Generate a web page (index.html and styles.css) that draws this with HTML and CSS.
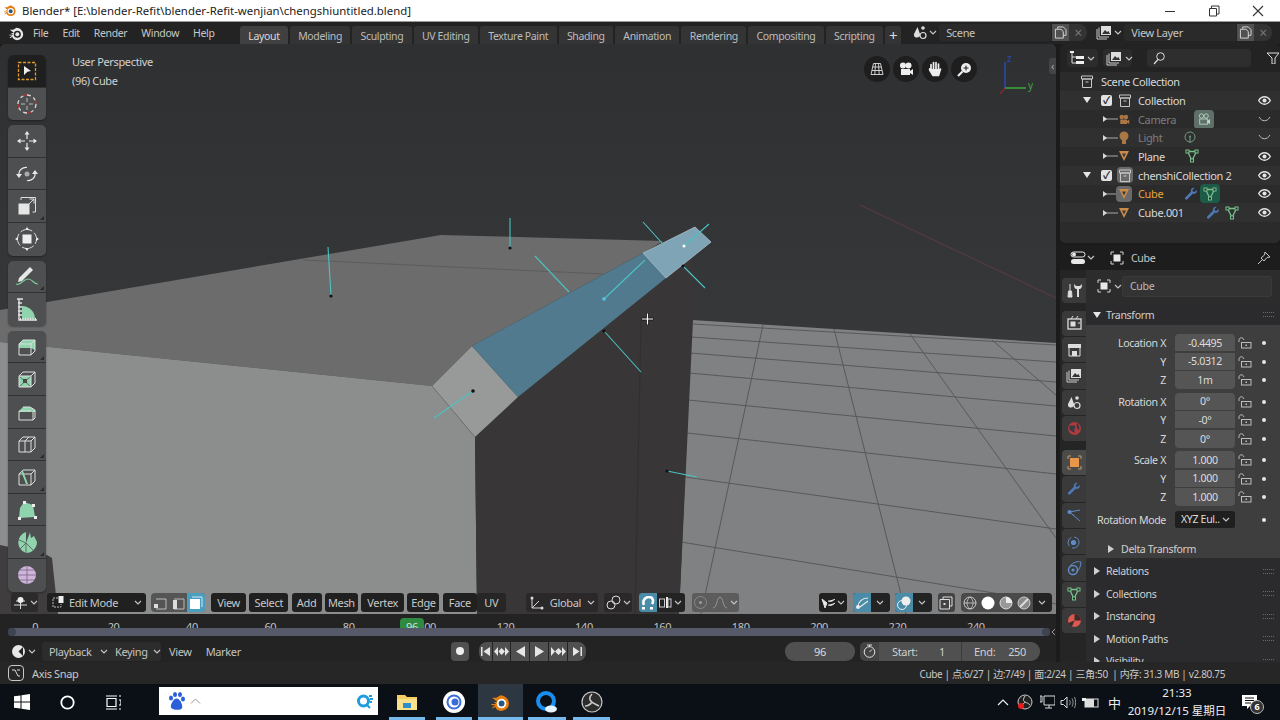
FILE: index.html
```html
<!DOCTYPE html>
<html lang="en">
<head>
<meta charset="utf-8">
<title>Blender</title>
<link rel="stylesheet" href="styles.css">
</head>
<body>
<svg class="defs" width="0" height="0">
  <defs>
    <symbol id="eye" viewBox="0 0 12 12"><path d="M.6 6C2.2 3.4 4 2.5 6 2.5S9.800 3.400 11.400 6C9.800 8.600 8 9.500 6 9.500S2.200 8.600.6 6Z" fill="none" stroke="#e4e4e4" stroke-width="1.300"/><circle cx="6" cy="6" r="1.900" fill="#e4e4e4"/></symbol>
    <symbol id="lock" viewBox="0 0 14 12"><path d="M1 5V3.200C1 1.600 2.200 .8 3.400 .8S5.600 1.600 5.800 3" fill="none" stroke="#bdbdbd"/><rect x="3.500" y="5.500" width="9.500" height="5.500" fill="none" stroke="#bdbdbd"/><rect x="7.500" y="7.500" width="1.500" height="1.500" fill="#bdbdbd"/></symbol>
    <symbol id="archive" viewBox="0 0 12 13"><path d="M.5 1H11.500M1.500 4H10.500V12.500H1.500ZM4.500 7H7.500M.5 1V4H11.500V1" fill="none" stroke="#c8c8c8" stroke-width="1"/></symbol>
    <symbol id="meshobj" viewBox="0 0 12 12"><path d="M1 1H11L6 11Z" fill="#c98a4c"/><path d="M4 3.400H8L6 7.400Z" fill="#3a3a3a"/></symbol>
    <symbol id="meshdata" viewBox="0 0 14 14"><path d="M2.500 2.500H11.500L7 11.500Z" fill="none" stroke="#76c28c" stroke-width="1.300"/><rect x="1" y="1" width="3" height="3" fill="#2c2c2c" stroke="#76c28c"/><rect x="10" y="1" width="3" height="3" fill="#2c2c2c" stroke="#76c28c"/><rect x="5.500" y="10" width="3" height="3" fill="#2c2c2c" stroke="#76c28c"/></symbol>
    <symbol id="wrench" viewBox="0 0 14 14"><path d="M12.800 2.900 10.400 5 8.800 4.600 8.400 3 10.600 .9C8.600.3 6.300 1.800 6.900 4.700L1.200 10.500C.3 11.500 1.900 13.400 3 12.400L8.800 6.700C11.400 7.400 13.400 5.400 12.800 2.900Z" fill="#4d78b5"/></symbol>
    <symbol id="objbox" viewBox="0 0 14 14"><path d="M1 4V1H4M10 1H13V4M13 10V13H10M4 13H1V10" fill="none" stroke="#d5d5d5"/><rect x="3.500" y="3.500" width="7" height="7" fill="#e8e8e8"/></symbol>
    <symbol id="chev" viewBox="0 0 8 5"><path d="M1 1 4 4 7 1" fill="none" stroke="#c4c4c4" stroke-width="1.200"/></symbol>
    <symbol id="copy" viewBox="0 0 14 14"><path d="M4 3V1H10L13 4V10H10M1.500 3.500H7.500L10 6V13H1.500Z" fill="none" stroke="#dcdcdc"/></symbol>
    <symbol id="cube" viewBox="0 0 20 20"><path d="M2 7H14V18H2ZM2 7 6 3H18V14L14 18M14 7 18 3" fill="none" stroke="#dedede"/></symbol>
    <symbol id="tri-r" viewBox="0 0 8 8"><path d="M1 0 7 4 1 8Z" fill="#cfcfcf"/></symbol>
    <symbol id="tri-d" viewBox="0 0 8 8"><path d="M0 1H8L4 7Z" fill="#e5e5e5"/></symbol>
    <symbol id="grip" viewBox="0 0 11 5"><path d="M0 .5H11M0 4.500H11" stroke="#6a6a6a" stroke-dasharray="1 1"/></symbol>
    <symbol id="branch" viewBox="0 0 18 8"><path d="M5 4H18" stroke="#a8a8a8"/><path d="M3 1 7 4 3 7Z" fill="#d8d8d8"/></symbol>
    <symbol id="blender" viewBox="0 0 20 18"><path d="M1 10.500H6L3.500 8.500H7L2 4.500H6L10 2C14 2 18 5.500 18 10S14 17 10.500 17C7.500 17 5.500 15 5 13L3 14.500H1.500L5 11.500H2Z" fill="#e87d0d"/><circle cx="11" cy="10" r="4.500" fill="#fff"/><circle cx="11" cy="10" r="2.800" fill="#265787"/></symbol>
  </defs>
</svg>

<header class="titlebar">
  <svg class="title-logo" width="14" height="13"><use href="#blender"/></svg>
  <span class="title-text">Blender* [E:\blender-Refit\blender-Refit-wenjian\chengshiuntitled.blend]</span>
  <div class="winctl">
    <svg width="12" height="12" viewBox="0 0 12 12"><path d="M1 6.500H11" stroke="#333"/></svg>
    <svg width="12" height="12" viewBox="0 0 12 12"><path d="M3.500 3V1H11V9H9M1.500 3.500H8.500V11H1.500Z" fill="none" stroke="#333"/></svg>
    <svg width="12" height="12" viewBox="0 0 12 12"><path d="M1 1 11 11M11 1 1 11" stroke="#333" stroke-width="1.100"/></svg>
  </div>
</header>

<nav class="topbar">
  <svg class="top-logo" width="17" height="15" viewBox="0 0 20 18"><path d="M1 10.500H6L3.500 8.500H7L2 4.500H6L10 2C14 2 18 5.500 18 10S14 17 10.500 17C7.500 17 5.500 15 5 13L3 14.500H1.500L5 11.500H2Z" fill="#e6e6e6"/><circle cx="11" cy="10" r="4.200" fill="#232323"/><circle cx="11" cy="10" r="2.400" fill="#e6e6e6"/></svg>
  <div class="menus"><span>File</span><span>Edit</span><span>Render</span><span>Window</span><span>Help</span></div>
  <div class="tabs">
    <span class="tab active">Layout</span><span class="tab">Modeling</span><span class="tab">Sculpting</span><span class="tab">UV Editing</span><span class="tab">Texture Paint</span><span class="tab">Shading</span><span class="tab">Animation</span><span class="tab">Rendering</span><span class="tab">Compositing</span><span class="tab">Scripting</span><span class="tab plus">+</span>
  </div>
  <div class="selector sel-scene">
    <svg width="14" height="15" viewBox="0 0 14 15"><path d="M4.500 2 1 9C.5 11 2 13 4 12.500 6 12.500 7.500 11 7 9Z" fill="#dcdcdc"/><circle cx="10" cy="10.500" r="3" fill="none" stroke="#dcdcdc" stroke-width="1.200"/><circle cx="10" cy="3" r="1.800" fill="#dcdcdc"/></svg>
    <svg class="ch" width="8" height="5"><use href="#chev"/></svg>
    <span class="sel-field">Scene</span>
    <span class="sel-copy"><svg width="13" height="13"><use href="#copy"/></svg></span>
    <span class="sel-x">×</span>
  </div>
  <div class="selector sel-layer">
    <svg width="16" height="15" viewBox="0 0 16 15"><path d="M1 4V14H11M3 2.500V12H13" fill="none" stroke="#ccc"/><rect x="5" y="1" width="10" height="9" fill="#ddd"/><path d="M6 9 9 5 11 7 12.500 6 14 9Z" fill="#333"/></svg>
    <svg class="ch" width="8" height="5"><use href="#chev"/></svg>
    <span class="sel-field">View Layer</span>
    <span class="sel-copy"><svg width="13" height="13"><use href="#copy"/></svg></span>
    <span class="sel-x">×</span>
  </div>
</nav>

<main class="workspace">
  <div class="leftcol">
  <section class="viewport">
    <svg class="scene" viewBox="0 44 1056 570" preserveAspectRatio="none">
      <defs><linearGradient id="bg" x1="0" y1="0" x2="0" y2="1"><stop offset="0" stop-color="#2f3031"/><stop offset=".55" stop-color="#37383a"/><stop offset="1" stop-color="#36373a"/></linearGradient></defs>
      <rect x="0" y="44" width="1056" height="570" fill="url(#bg)"/>
      <path d="M860 205 1056 298" stroke="#5f3a42" stroke-width="1"/>
      <path d="M692 320 1056 343V614H679Z" fill="#808182"/>
      <g stroke="#58595b" stroke-width="1" fill="none">
        <path d="M693 324 1056 345M691 337 1056 362M690 353 1056 382M689 373 1056 406M688 400 1056 436M687 433 1056 474M685 477 1056 529M681 542 1000 594 1056 604"/>
        <path d="M763 325 701 614M834 329 906 614M910 334 1056 538M992 340 1056 395"/>
      </g>
      <path d="M0 310 441 235 663 241 643 253 472 346 432 386 0 342Z" fill="#6c6c6d"/>
      <path d="M303 260 603 274" stroke="#5c5c5d" stroke-width="1"/>
      <path d="M0 342 432 386 475 437 477 614H0Z" fill="#8c8e8e"/>
      <path d="M0 545 47 555 52 558 58 614H0Z" fill="#3f3d3d"/>
      <path d="M475 437 518 397 666 278 693 256V320L679 614H477Z" fill="#383636"/>
      <path d="M641 320 635 614" stroke="#312f2f"/>
      <path d="M432 386 472 346 518 397 475 437Z" fill="#989999"/>
      <path d="M432 386 475 437" fill="none" stroke="#6d6d6d" stroke-width=".8"/>
      <path d="M472 346 643 253 666 278 518 397Z" fill="#517a8e"/>
      <path d="M643 253 695 227 711 242 666 278Z" fill="#7fa4b5" stroke="#a8c0cc" stroke-width=".8"/>
      <g stroke="#4cc2c2" stroke-width="1.100" fill="none">
        <path d="M328 247 331 296M510 218 510 248M535 256 569 292M643 222 662 243M434 418 473 391M604 331 641 372M604 299 645 260M684 246 709 224M683 266 705 288M667 471 697 477"/>
      </g>
      <g fill="#111">
        <circle cx="331" cy="296" r="1.600"/><circle cx="510" cy="248" r="1.600"/><circle cx="473" cy="391" r="1.800"/><circle cx="604" cy="331" r="1.600"/><circle cx="683" cy="266" r="1.500"/><circle cx="667" cy="471" r="1.600"/>
      </g>
      <circle cx="604" cy="299" r="1.800" fill="#56c6e4"/><circle cx="684" cy="246" r="1.500" fill="#fff"/>
      <path d="M647.500 313V325M641.500 319H653.500" stroke="#1a1a1a" stroke-width="3"/>
      <path d="M647.500 313.500V324.500M642 319H653" stroke="#fff" stroke-width="1.200"/>
    </svg>

    <div class="vp-info"><div>User Perspective</div><div>(96) Cube</div></div>

    <div class="toolbar">
      <div class="tool-group">
        <div class="tool on"><svg width="20" height="20" viewBox="0 0 20 20"><rect x="1.500" y="1.500" width="17" height="17" fill="none" stroke="#e09a2b" stroke-width="1.300" stroke-dasharray="3 1.500"/><path d="M7 5 14 10 10.500 10.700 7 14Z" fill="#eee"/></svg></div>
        <div class="tool"><svg width="22" height="22" viewBox="0 0 22 22"><circle cx="11" cy="11" r="9" fill="none" stroke="#d8d8d8" stroke-width="1.300" stroke-dasharray="4 3"/><circle cx="11" cy="11" r="9" fill="none" stroke="#a33" stroke-width="1.300" stroke-dasharray="4 10" stroke-dashoffset="4"/><path d="M11 5V9M11 13V17M5 11H9M13 11H17" stroke="#bbb"/></svg></div>
      </div>
      <div class="tool-group">
        <div class="tool"><svg width="22" height="22" viewBox="0 0 22 22"><path d="M11 4V9M11 13V18M4 11H9M13 11H18" stroke="#e8e8e8" stroke-width="1.200"/><path d="M11 1 13.500 4.500H8.500ZM11 21 13.500 17.500H8.500ZM1 11 4.500 8.500V13.500ZM21 11 17.500 8.500V13.500Z" fill="#e8e8e8"/></svg></div>
        <div class="tool"><svg width="22" height="22" viewBox="0 0 22 22"><circle cx="11" cy="11" r="2.500" fill="#aaa"/><path d="M3 13C2 7 7 4 11 4.500M19 9C20 15 15 18 11 17.500" fill="none" stroke="#e8e8e8" stroke-width="1.200"/><path d="M0 11H6L3 15ZM22 11H16L19 7Z" fill="#e8e8e8"/></svg></div>
        <div class="tool corner"><svg width="20" height="20" viewBox="0 0 20 20"><rect x="1.500" y="7.500" width="11" height="11" fill="#e6e6e6"/><path d="M4 4V1.500H18.500V16H15.500M9 11 17 3M12.500 3H17V7.500" fill="none" stroke="#ddd"/></svg></div>
        <div class="tool"><svg width="24" height="24" viewBox="0 0 24 24"><circle cx="12" cy="12" r="9.500" fill="none" stroke="#ddd" stroke-dasharray="5 2.500"/><rect x="7.500" y="7.500" width="9" height="9" fill="#eee"/><path d="M12 0 14 3H10ZM12 24 14 21H10ZM0 12 3 10V14ZM24 12 21 10V14Z" fill="#eee"/></svg></div>
      </div>
      <div class="tool-group">
        <div class="tool corner"><svg width="24" height="22" viewBox="0 0 24 22"><path d="M4 13 15 2 18 5 7 16 3 17Z" fill="#e8e8e8"/><path d="M1 19C6 21 8 14 13 14S18 19 23 19" fill="none" stroke="#79c79b" stroke-width="1.200"/></svg></div>
        <div class="tool"><svg width="22" height="24" viewBox="0 0 22 24"><path d="M6 22V9A13 13 0 0 1 19 22Z" fill="#8fd4ad"/><path d="M3 2V23H21M1 2H7M2 6H6M2 10H6M2 14H6M2 18H6" fill="none" stroke="#e4e4e4" stroke-width="1.400"/><path d="M4 22H21" stroke="#e4e4e4" stroke-width="2.500" stroke-dasharray="1 1.500"/></svg></div>
      </div>
      <div class="tool-group">
        <div class="tool corner"><svg width="20" height="20"><path d="M2 7 6 3H18V13L14 11H2Z" fill="#8fd4ad"/><use href="#cube"/></svg></div>
        <div class="tool"><svg width="20" height="20" viewBox="0 0 20 20"><path d="M2 7H14V18H2Z" fill="#8fd4ad"/><rect x="6" y="10" width="4" height="4" fill="#444"/><path d="M2 7 14 18M14 7 2 18" stroke="#555" stroke-width=".8"/><use href="#cube"/></svg></div>
        <div class="tool"><svg width="20" height="20" viewBox="0 0 20 20"><path d="M2 9 6 5H13L18 8V10H2Z" fill="#8fd4ad"/><path d="M2 9V18H16V10L18 8V16L16 18M2 9H14" fill="none" stroke="#dedede"/><path d="M6 5H13L18 8" fill="none" stroke="#dedede"/></svg></div>
        <div class="tool corner"><svg width="20" height="20"><use href="#cube"/><path d="M8 7V18M8 7 12 3" stroke="#dedede" fill="none"/></svg></div>
        <div class="tool corner"><svg width="20" height="20"><use href="#cube"/><path d="M5 4 10 17" stroke="#8fd4ad" stroke-width="2"/></svg></div>
        <div class="tool"><svg width="20" height="20" viewBox="0 0 20 20"><path d="M7 2 16 5 18 17 2 18 3 8Z" fill="#8fd4ad"/><g fill="#eee"><rect x="6" y="1" width="3" height="3"/><rect x="15" y="4" width="3" height="3"/><rect x="17" y="16" width="3" height="3"/><rect x="1" y="17" width="3" height="3"/></g></svg></div>
        <div class="tool corner"><svg width="24" height="24" viewBox="0 0 24 24"><path d="M11 13 11 2A11 11 0 0 0 11 23 11 11 0 0 0 22 12L19 6 16 8 15 2.500Z" fill="#8fd4ad"/><path d="M11 13V23M11 13 2 9M11 13 4 20M11 13 18 20" stroke="#555" stroke-width=".8"/></svg></div>
        <div class="tool"><svg width="20" height="20" viewBox="0 0 20 20"><circle cx="10" cy="10" r="9" fill="#cfb4dc"/><path d="M1 10H19M10 1V19M3 5H17M3 15H17" stroke="#77657f" stroke-width=".8"/></svg></div>
      </div>
    </div>

    <div class="navgizmo">
      <span class="nav"><svg width="14" height="14" viewBox="0 0 14 14"><path d="M3.500 1.500H10.500L13 12.500H1ZM2.500 5H11.500M2 8.500H12M5.500 1.500 4.800 12.500M8.500 1.500 9.200 12.500" fill="none" stroke="#ddd" stroke-width=".9"/></svg></span>
      <span class="nav"><svg width="16" height="14" viewBox="0 0 16 14"><circle cx="5" cy="3.500" r="3" fill="#eee"/><circle cx="10.500" cy="3.500" r="3" fill="#eee"/><rect x="3" y="7" width="9" height="6" fill="#eee"/><path d="M12 9 15 7V13L12 11Z" fill="#eee"/></svg></span>
      <span class="nav"><svg width="14" height="16" viewBox="0 0 14 16"><path d="M3 9V3.500M5.500 8V1.500M8 8V1.500M10.500 8.500V3M3 8C2 7 1 8 2 9.500L5 14.500H10.500L12.500 8" fill="#eee" stroke="#eee" stroke-width="1.700" stroke-linecap="round"/></svg></span>
      <span class="nav"><svg width="15" height="15" viewBox="0 0 15 15"><circle cx="9" cy="6" r="5" fill="#eee"/><path d="M5.500 9.500 1 14" stroke="#eee" stroke-width="2.200"/><path d="M9 3.500V8.500M6.500 6H11.500" stroke="#222" stroke-width="1.100"/></svg></span>
    </div>

    <svg class="axis" width="46" height="50" viewBox="0 0 46 50"><path d="M12 36 7 42" stroke="#7a2b33" stroke-width="1.500"/><path d="M12 36V10" stroke="#2a48b0" stroke-width="1.500"/><path d="M12 36H33" stroke="#3fa83f" stroke-width="1.500"/><text x="35" y="37" class="axis-y">y</text><text x="14" y="10" class="axis-z">z</text></svg>
    <span class="side-arrow">‹</span>

    <div class="vp-header">
      <span class="hbtn h-type"><svg width="15" height="14" viewBox="0 0 15 14"><path d="M1 9H14M7.500 4V13M3 5H12" stroke="#ddd"/><circle cx="7.500" cy="4" r="3" fill="#eee"/></svg><svg width="8" height="5"><use href="#chev"/></svg></span>
      <span class="hbtn h-mode"><svg width="13" height="13" viewBox="0 0 13 13"><path d="M2 2H8M2 3V11H10V8" fill="none" stroke="#bbb" stroke-dasharray="2 1"/><rect x="7.500" y="0" width="5" height="7" fill="#eee"/></svg><span>Edit Mode</span><svg class="push" width="8" height="5"><use href="#chev"/></svg></span>
      <span class="selmode">
        <span><svg width="14" height="14" viewBox="0 0 14 14"><path d="M3 3H13V13H3" fill="none" stroke="#bbb"/><rect x="1" y="8" width="4" height="4" fill="#ddd"/></svg></span>
        <span><svg width="14" height="14" viewBox="0 0 14 14"><path d="M3 3H13V13H3" fill="none" stroke="#bbb"/><rect x="2" y="4" width="4" height="9" fill="#ddd"/></svg></span>
        <span class="on"><svg width="14" height="14" viewBox="0 0 14 14"><path d="M3 1H13V11" fill="none" stroke="#cfeaf5"/><rect x="1" y="3" width="10" height="10" fill="#fff"/></svg></span>
      </span>
      <span class="hbtn m m-first w35">View</span><span class="hbtn m w39">Select</span><span class="hbtn m w30">Add</span><span class="hbtn m w33">Mesh</span><span class="hbtn m w43">Vertex</span><span class="hbtn m w32">Edge</span><span class="hbtn m w34">Face</span><span class="hbtn m uv">UV</span>
      <span class="hbtn h-global"><svg width="14" height="14" viewBox="0 0 14 14"><path d="M2 1V12H13M2 12 9 5" fill="none" stroke="#d8d8d8"/><circle cx="2" cy="2" r="1.500" fill="#ddd"/><circle cx="12" cy="12" r="1.500" fill="#ddd"/></svg><span>Global</span><svg class="push" width="8" height="5"><use href="#chev"/></svg></span>
      <span class="hbtn h-pivot"><svg width="15" height="15" viewBox="0 0 15 15"><circle cx="5" cy="10" r="4" fill="none" stroke="#ddd"/><circle cx="10" cy="5" r="4" fill="none" stroke="#ddd"/></svg><svg width="8" height="5"><use href="#chev"/></svg></span>
      <span class="split h-snap"><span class="blue"><svg width="14" height="14" viewBox="0 0 14 14"><path d="M3 9C1 5 4 1 8 1S13 5 11 8" fill="none" stroke="#fff" stroke-width="2.600"/><rect x="1" y="11" width="3" height="2.500" fill="#fff"/><rect x="9" y="11" width="3" height="2.500" fill="#fff"/></svg></span><span class="d"><svg width="13" height="13" viewBox="0 0 13 13"><rect x=".5" y="3" width="5" height="8" fill="none" stroke="#ccc"/><rect x="7" y="1" width="2" height="11" fill="#eee"/><rect x="9" y="3" width="3" height="8" fill="none" stroke="#ccc"/></svg><svg width="8" height="5"><use href="#chev"/></svg></span></span>
      <span class="hbtn h-prop"><svg width="13" height="13" viewBox="0 0 13 13"><circle cx="6.500" cy="6.500" r="6" fill="none" stroke="#888"/><circle cx="6.500" cy="6.500" r="1.600" fill="#999"/></svg><i></i><svg width="16" height="13" viewBox="0 0 16 13"><path d="M1 12C5 12 5 1 8 1S11 12 15 12" fill="none" stroke="#999"/></svg><svg width="8" height="5"><use href="#chev"/></svg></span>
      <span class="hbtn h-filter"><svg width="15" height="12" viewBox="0 0 15 12"><path d="M1 2 6 6 4 11ZM7 4C10 5 12 4 14 2M7 8C10 9 12 8 14 6" fill="#eee" stroke="#ddd"/></svg><svg width="8" height="5"><use href="#chev"/></svg></span>
      <span class="split h-giz"><span class="blue"><svg width="14" height="14" viewBox="0 0 14 14"><circle cx="3" cy="11" r="2" fill="#eee"/><path d="M3 11C3 6 7 2 13 2M5 11 13 5" fill="none" stroke="#eee" stroke-width="1.100"/></svg></span><span class="d"><svg width="8" height="5"><use href="#chev"/></svg></span></span>
      <span class="split h-ovl"><span class="blue"><svg width="14" height="14" viewBox="0 0 14 14"><circle cx="5" cy="9" r="4.500" fill="none" stroke="#eee"/><circle cx="9" cy="5" r="4.500" fill="#eee"/></svg></span><span class="d"><svg width="8" height="5"><use href="#chev"/></svg></span></span>
      <span class="hbtn h-xray"><svg width="14" height="14" viewBox="0 0 14 14"><path d="M4 3V1H13V10H11M1 3.500H10.500V13H1Z" fill="none" stroke="#ddd"/><rect x="4.500" y="7" width="2" height="2" fill="#ddd"/></svg></span>
      <span class="shade">
        <span><svg width="14" height="14" viewBox="0 0 14 14"><circle cx="7" cy="7" r="6" fill="none" stroke="#ccc"/><path d="M1 7H13M7 1C3 4 3 10 7 13M7 1C11 4 11 10 7 13" fill="none" stroke="#ccc" stroke-width=".8"/></svg></span>
        <span><svg width="14" height="14" viewBox="0 0 14 14"><circle cx="7" cy="7" r="6.500" fill="#fff"/></svg></span>
        <span><svg width="14" height="14" viewBox="0 0 14 14"><circle cx="7" cy="7" r="6" fill="#999" stroke="#ddd"/><path d="M7 1A6 6 0 0 1 13 7H7Z" fill="#eee"/></svg></span>
        <span><svg width="14" height="14" viewBox="0 0 14 14"><circle cx="7" cy="7" r="6" fill="#8a8a8a" stroke="#ccc"/><path d="M3 11 11 3" stroke="#ddd" stroke-width="2"/></svg></span>
        <span class="sd"><svg width="8" height="5"><use href="#chev"/></svg></span>
      </span>
    </div>
  </section>

  <section class="timeline">
    <div class="ruler">
      <span>0</span><span>20</span><span>40</span><span>60</span><span>80</span><span>100</span><span>120</span><span>140</span><span>160</span><span>180</span><span>200</span><span>220</span><span>240</span>
      <em class="playhead">96</em>
    </div>
    <div class="scrollrow"><div class="scrollbar"><i></i><i></i></div><svg width="5" height="8" viewBox="0 0 5 8"><path d="M4 1 1 4 4 7" fill="none" stroke="#999"/></svg></div>
    <div class="tl-head">
      <span class="tl-type"><svg width="15" height="15" viewBox="0 0 15 15"><circle cx="7.500" cy="7.500" r="6.500" fill="#e8e8e8"/><path d="M7.500 7.500 12 3V12Z" fill="#232323"/></svg><svg width="8" height="5"><use href="#chev"/></svg></span>
      <span class="tl-menu w1">Playback<svg width="8" height="5"><use href="#chev"/></svg></span>
      <span class="tl-menu w2">Keying<svg width="8" height="5"><use href="#chev"/></svg></span>
      <span class="tl-plain p1">View</span>
      <span class="tl-plain p2">Marker</span>
      <span class="rec"><i></i></span>
      <span class="transport">
        <span><svg width="11" height="11" viewBox="0 0 11 11"><path d="M1 1H2.500V10H1ZM10 1V10L3.500 5.500Z" fill="#e6e6e6"/></svg></span>
        <span><svg width="15" height="11" viewBox="0 0 15 11"><path d="M4 1V10L0 5.500ZM7.500 2 11 5.500 7.500 9 4.500 5.500ZM11 1V10L15 5.500Z" fill="#e6e6e6"/></svg></span>
        <span><svg width="11" height="11" viewBox="0 0 11 11"><path d="M10 0V11L1 5.500Z" fill="#e6e6e6"/></svg></span>
        <span><svg width="11" height="11" viewBox="0 0 11 11"><path d="M1 0V11L10 5.500Z" fill="#e6e6e6"/></svg></span>
        <span><svg width="15" height="11" viewBox="0 0 15 11"><path d="M0 1V10L4 5.500ZM7.500 2 11 5.500 7.500 9 4 5.500ZM11 1 15 5.500 11 10Z" fill="#e6e6e6"/></svg></span>
        <span><svg width="11" height="11" viewBox="0 0 11 11"><path d="M1 1V10L7.500 5.500ZM8.500 1H10V10H8.500Z" fill="#e6e6e6"/></svg></span>
      </span>
      <span class="curframe">96</span>
      <span class="preview"><svg width="13" height="14" viewBox="0 0 13 14"><circle cx="6.500" cy="8" r="5.300" fill="none" stroke="#ddd"/><path d="M4 1H9M6.500 1V3M6.500 8 9 5.500" stroke="#ddd"/></svg></span>
      <span class="range"><span class="rng r-a"><u>Start:</u><s>1</s></span><span class="rng r-b"><u>End:</u><s>250</s></span></span>
    </div>
  </section>
  </div>

  <aside class="sidebar">
    <section class="outliner">
      <div class="ol-head">
        <span class="ol-btn w-a"><svg width="14" height="14" viewBox="0 0 14 14"><path d="M2 1V12H6M2 6H6" fill="none" stroke="#ddd"/><rect x="0" y="0" width="4" height="2" fill="#eee"/><rect x="6" y="5" width="8" height="3" fill="#eee"/><rect x="6" y="10" width="8" height="3" fill="#eee"/></svg><svg width="8" height="5"><use href="#chev"/></svg></span>
        <span class="ol-btn w-b"><svg width="16" height="15" viewBox="0 0 16 15"><path d="M1 4V14H11M3 2.500V12H13" fill="none" stroke="#ccc"/><rect x="5" y="1" width="10" height="9" fill="#ddd"/><path d="M6 9 9 5 11 7 12.500 6 14 9Z" fill="#333"/></svg><svg width="8" height="5"><use href="#chev"/></svg></span>
        <span class="ol-search"><svg width="12" height="13" viewBox="0 0 12 13"><circle cx="7.500" cy="4.500" r="3.800" fill="none" stroke="#ddd"/><path d="M5 7.500 1 12" stroke="#ddd" stroke-width="1.200"/></svg></span>
        <svg class="ol-filter" width="12" height="12" viewBox="0 0 12 12"><path d="M0 1H12L8 6V12H5V6Z" fill="none" stroke="#ddd"/></svg>
      </div>
      <div class="ol-row r0"><svg width="12" height="13"><use href="#archive"/></svg><span>Scene Collection</span></div>
      <div class="ol-row r1 coll alt"><svg class="tr" width="8" height="8"><use href="#tri-d"/></svg><span class="check">✓</span><svg class="ic" width="12" height="13"><use href="#archive"/></svg><span>Collection</span><svg class="vis" width="13" height="13"><use href="#eye"/></svg></div>
      <div class="ol-row r2 dim"><svg width="18" height="8"><use href="#branch"/></svg><svg class="ic2" width="12" height="11" viewBox="0 0 16 14"><circle cx="5" cy="3.500" r="3" fill="#c98a4c"/><circle cx="10.500" cy="3.500" r="3" fill="#c98a4c"/><rect x="3" y="7" width="9" height="6" fill="#c98a4c"/><path d="M12 9 15 7V13L12 11Z" fill="#c98a4c"/></svg><span class="lbl">Camera</span><span class="badge b-cam"><svg width="14" height="12" viewBox="0 0 16 14"><circle cx="5" cy="3.500" r="2.500" fill="none" stroke="#bcd8c8"/><circle cx="10.500" cy="3.500" r="2.500" fill="none" stroke="#bcd8c8"/><rect x="3" y="7" width="9" height="6" fill="none" stroke="#bcd8c8"/><path d="M12 9 15 7V13L12 11Z" fill="#bcd8c8"/></svg></span><svg class="vis" width="13" height="7" viewBox="0 0 13 7"><path d="M1 1C4 6 9 6 12 1" fill="none" stroke="#bbb"/></svg></div>
      <div class="ol-row r2 dim alt"><svg width="18" height="8"><use href="#branch"/></svg><svg class="ic2" width="12" height="13" viewBox="0 0 12 13"><circle cx="6" cy="5" r="4.500" fill="#c98a4c"/><rect x="4" y="9" width="4" height="4" fill="#c98a4c"/></svg><span class="lbl">Light</span><svg class="bd-light" width="12" height="13" viewBox="0 0 12 13"><circle cx="6" cy="6" r="5" fill="none" stroke="#6b9a80"/><path d="M6 6V12" stroke="#6b9a80"/><circle cx="6" cy="5.500" r="1" fill="#6b9a80"/></svg><svg class="vis" width="13" height="7" viewBox="0 0 13 7"><path d="M1 1C4 6 9 6 12 1" fill="none" stroke="#bbb"/></svg></div>
      <div class="ol-row r2"><svg width="18" height="8"><use href="#branch"/></svg><svg width="12" height="12"><use href="#meshobj"/></svg><span class="lbl">Plane</span><svg class="bd-plane" width="14" height="14"><use href="#meshdata"/></svg><svg class="vis" width="13" height="13"><use href="#eye"/></svg></div>
      <div class="ol-row r1 coll alt"><svg class="tr" width="8" height="8"><use href="#tri-d"/></svg><span class="check">✓</span><span class="hl"><svg width="12" height="13"><use href="#archive"/></svg></span><span>chenshiCollection 2</span><svg class="vis" width="13" height="13"><use href="#eye"/></svg></div>
      <div class="ol-row r2"><svg width="18" height="8"><use href="#branch"/></svg><span class="hl"><svg width="12" height="12"><use href="#meshobj"/></svg></span><span class="lbl active-name">Cube</span><svg class="bd-wr1" width="14" height="14"><use href="#wrench"/></svg><span class="badge b-mesh"><svg width="14" height="14"><use href="#meshdata"/></svg></span><svg class="vis" width="13" height="13"><use href="#eye"/></svg></div>
      <div class="ol-row r2 alt"><svg width="18" height="8"><use href="#branch"/></svg><svg width="12" height="12"><use href="#meshobj"/></svg><span class="lbl">Cube.001</span><svg class="bd-wr2" width="14" height="14"><use href="#wrench"/></svg><svg class="bd-mesh2" width="14" height="14"><use href="#meshdata"/></svg><svg class="vis" width="13" height="13"><use href="#eye"/></svg></div>
    </section>

    <section class="properties">
      <div class="pr-head">
        <span class="pr-type"><svg width="16" height="14" viewBox="0 0 16 14"><rect x="1" y="1" width="14" height="5" rx="2.500" fill="none" stroke="#e8e8e8"/><rect x="1" y="8" width="14" height="5" rx="2.500" fill="#e8e8e8"/><circle cx="4" cy="3.500" r="2" fill="#e8e8e8"/></svg><svg width="8" height="5"><use href="#chev"/></svg></span>
        <svg class="pr-obj" width="14" height="14"><use href="#objbox"/></svg>
        <span class="pr-name">Cube</span>
        <svg class="pr-pin" width="14" height="14" viewBox="0 0 14 14"><path d="M8 1 13 6 10 6.500 7 10 4 7 7.500 4ZM5 9 1 13" fill="none" stroke="#c8c8c8"/></svg>
      </div>
      <div class="pr-body">
        <div class="pr-tabs">
          <span class="ptab g1"><svg width="15" height="15" viewBox="0 0 15 15"><path d="M3 1V8M1.500 8H4.500L5 14H1Z" fill="#ddd" stroke="#ddd"/><path d="M7 1C7 5 8 6 10 6V14H12V6C14 6 15 5 15 1L13 3H9Z" fill="#ddd"/></svg></span>
          <span class="ptab"><svg width="15" height="14" viewBox="0 0 15 14"><rect x="1" y="3" width="13" height="10" fill="none" stroke="#ddd" stroke-width="1.300"/><rect x="3.500" y="5.500" width="5" height="5" fill="#ddd"/><path d="M4 3 6 0M9 3 11 0M11 7H13" stroke="#ddd"/></svg></span>
          <span class="ptab"><svg width="15" height="14" viewBox="0 0 15 14"><rect x="1" y="1" width="13" height="4" fill="#ddd"/><path d="M2 5V13H13V5" fill="none" stroke="#ddd"/><rect x="5" y="8" width="5" height="5" fill="#ddd"/></svg></span>
          <span class="ptab"><svg width="16" height="15" viewBox="0 0 16 15"><path d="M1 4V14H11M3 2.500V12H13" fill="none" stroke="#ccc"/><rect x="5" y="1" width="10" height="9" fill="#ddd"/><path d="M6 9 9 5 11 7 12.500 6 14 9Z" fill="#333"/></svg></span>
          <span class="ptab"><svg width="14" height="15" viewBox="0 0 14 15"><path d="M4.500 2 1 9C.5 11 2 13 4 12.500 6 12.500 7.500 11 7 9Z" fill="#dcdcdc"/><circle cx="10" cy="10.500" r="3" fill="none" stroke="#dcdcdc" stroke-width="1.200"/><circle cx="10" cy="3" r="1.800" fill="#dcdcdc"/></svg></span>
          <span class="ptab g2"><svg width="15" height="15" viewBox="0 0 15 15"><circle cx="7.500" cy="7.500" r="6.500" fill="#b23a3a"/><path d="M3 4C5 6 7 3 8 5S6 9 8 11 3 10 2 8ZM10 2C12 4 13 7 12 9 10 9 9 5 10 2Z" fill="#3a3a46"/></svg></span>
          <span class="ptab g3"><svg width="15" height="15" viewBox="0 0 15 15"><path d="M1 4V1H4M11 1H14V4M14 11V14H11M4 14H1V11" fill="none" stroke="#c29a6a"/><rect x="3" y="3" width="9" height="9" fill="#e8964a"/></svg></span>
          <span class="ptab"><svg width="14" height="14"><use href="#wrench"/></svg></span>
          <span class="ptab"><svg width="14" height="14" viewBox="0 0 14 14"><circle cx="2.500" cy="4" r="2" fill="#5d8cc8"/><path d="M2.500 4 13 2M2.500 4 13 13M6 7V6" stroke="#5d8cc8"/></svg></span>
          <span class="ptab"><svg width="14" height="14" viewBox="0 0 14 14"><circle cx="6.500" cy="7.500" r="5.500" fill="none" stroke="#5d8cc8" stroke-dasharray="10 3"/><circle cx="6.500" cy="7.500" r="2.600" fill="#5d8cc8"/></svg></span>
          <span class="ptab"><svg width="15" height="15" viewBox="0 0 15 15"><circle cx="6" cy="9" r="4.500" fill="none" stroke="#5d8cc8" stroke-width="1.500"/><circle cx="6" cy="9" r="1.600" fill="#5d8cc8"/><path d="M3 5C6 1 11 0 14 1 14 5 12 9 9 12" fill="none" stroke="#5d8cc8"/></svg></span>
          <span class="ptab"><svg width="14" height="14"><use href="#meshdata"/></svg></span>
          <span class="ptab"><svg width="15" height="15" viewBox="0 0 15 15"><circle cx="7.500" cy="7.500" r="6.500" fill="#d9584f"/><path d="M7.500 1A6.500 6.500 0 0 1 14 7.500H7.500ZM1.500 10 7.500 7.500 5 13.500C3.500 13 2 12 1.500 10Z" fill="#3a2a2a"/></svg></span>
        </div>
        <div class="pr-content">
          <div class="objrow"><svg width="14" height="14"><use href="#objbox"/></svg><svg class="ch" width="8" height="5"><use href="#chev"/></svg><span class="objfield">Cube</span></div>
          <div class="phead open"><svg width="8" height="8"><use href="#tri-d"/></svg><span>Transform</span><svg class="gr" width="11" height="5"><use href="#grip"/></svg></div>
          <div class="tf">
            <div class="tfgroup">
              <div class="tfrow"><label>Location X</label><span class="fld">-0.4495</span><svg width="14" height="12"><use href="#lock"/></svg><b></b></div>
              <div class="tfrow"><label>Y</label><span class="fld">-5.0312</span><svg width="14" height="12"><use href="#lock"/></svg><b></b></div>
              <div class="tfrow"><label>Z</label><span class="fld">1m</span><svg width="14" height="12"><use href="#lock"/></svg><b></b></div>
            </div>
            <div class="tfgroup">
              <div class="tfrow"><label>Rotation X</label><span class="fld">0°</span><svg width="14" height="12"><use href="#lock"/></svg><b></b></div>
              <div class="tfrow"><label>Y</label><span class="fld">-0°</span><svg width="14" height="12"><use href="#lock"/></svg><b></b></div>
              <div class="tfrow"><label>Z</label><span class="fld">0°</span><svg width="14" height="12"><use href="#lock"/></svg><b></b></div>
            </div>
            <div class="tfgroup">
              <div class="tfrow"><label>Scale X</label><span class="fld">1.000</span><svg width="14" height="12"><use href="#lock"/></svg><b></b></div>
              <div class="tfrow"><label>Y</label><span class="fld">1.000</span><svg width="14" height="12"><use href="#lock"/></svg><b></b></div>
              <div class="tfrow"><label>Z</label><span class="fld">1.000</span><svg width="14" height="12"><use href="#lock"/></svg><b></b></div>
            </div>
            <div class="tfrow rotmode"><label>Rotation Mode</label><span class="fld drop">XYZ Eul..<svg width="8" height="5"><use href="#chev"/></svg></span><i></i><b></b></div>
            <div class="delta"><svg width="8" height="8"><use href="#tri-r"/></svg><span>Delta Transform</span></div>
          </div>
          <div class="closed">
            <div class="phead"><svg width="8" height="8"><use href="#tri-r"/></svg><span>Relations</span><svg class="gr" width="11" height="5"><use href="#grip"/></svg></div>
            <div class="phead"><svg width="8" height="8"><use href="#tri-r"/></svg><span>Collections</span><svg class="gr" width="11" height="5"><use href="#grip"/></svg></div>
            <div class="phead"><svg width="8" height="8"><use href="#tri-r"/></svg><span>Instancing</span><svg class="gr" width="11" height="5"><use href="#grip"/></svg></div>
            <div class="phead"><svg width="8" height="8"><use href="#tri-r"/></svg><span>Motion Paths</span><svg class="gr" width="11" height="5"><use href="#grip"/></svg></div>
            <div class="phead"><svg width="8" height="8"><use href="#tri-r"/></svg><span>Visibility</span><svg class="gr" width="11" height="5"><use href="#grip"/></svg></div>
          </div>
        </div>
      </div>
    </section>
  </aside>
</main>

<footer class="statusbar">
  <span class="key"><svg width="12" height="12" viewBox="0 0 12 12"><path d="M2 3H5L8 9H10M7 3H10" fill="none" stroke="#ddd"/></svg></span>
  <span class="st-left">Axis Snap</span>
  <span class="st-right">Cube | 点:6/27 | 边:7/49 | 面:2/24 | 三角:50 &nbsp;| 内存: 31.3 MB | v2.80.75</span>
</footer>

<footer class="taskbar">
  <span class="tb-start"><svg width="16" height="16" viewBox="0 0 16 16"><path d="M0 2.300 6.500 1.400V7.500H0ZM7.500 1.200 16 0V7.500H7.500ZM0 8.500H6.500V14.600L0 13.700ZM7.500 8.500H16V16L7.500 14.800Z" fill="#fff"/></svg></span>
  <span class="tb-cortana"><svg width="15" height="15" viewBox="0 0 15 15"><circle cx="7.500" cy="7.500" r="6.200" fill="none" stroke="#fff" stroke-width="1.800"/></svg></span>
  <span class="tb-view"><svg width="16" height="15" viewBox="0 0 16 15"><path d="M2 3.500H11V11.500H2ZM1 1H12M1 14H12M14 1H16M14 5H16V10H14M14 14H16" fill="none" stroke="#fff" stroke-width="1.200"/></svg></span>
  <div class="tb-search">
    <svg width="17" height="18" viewBox="0 0 17 18"><g fill="#2a5fd8"><ellipse cx="3" cy="6" rx="2" ry="2.500"/><ellipse cx="7" cy="2.500" rx="2" ry="2.500"/><ellipse cx="12" cy="2.500" rx="2" ry="2.500"/><ellipse cx="15" cy="7" rx="2" ry="2.500"/><path d="M8.500 6.500C12 6.500 15 13 14 16S4 18 3 15.500 5.500 6.500 8.500 6.500Z"/></g></svg>
    <svg class="sr-up" width="11" height="6" viewBox="0 0 11 6"><path d="M1 5.500 5.500 1 10 5.500" fill="none" stroke="#999"/></svg>
    <svg class="sr-q" width="16" height="16" viewBox="0 0 16 16"><circle cx="6.500" cy="8" r="5" fill="none" stroke="#1d9de0" stroke-width="3"/><path d="M9 11 13 15M12 3H15M13 6H16M13 9H15" stroke="#1d9de0" stroke-width="2"/></svg>
  </div>
  <span class="app u1"><svg width="20" height="18" viewBox="0 0 20 18"><path d="M0 2H8L10 4H20V17H0Z" fill="#f5cf62"/><rect x="0" y="6" width="20" height="11" fill="#fbe08c"/><rect x="6" y="10" width="8" height="5" fill="#2f8fce"/></svg></span>
  <span class="app u2"><svg width="22" height="22" viewBox="0 0 22 22"><circle cx="11" cy="11" r="11" fill="#fff"/><circle cx="11" cy="11" r="7.500" fill="#3a6bd8"/><circle cx="11" cy="11" r="5.500" fill="#fff"/><circle cx="12" cy="11" r="3.500" fill="#3a6bd8"/></svg></span>
  <span class="app u3 cur"><svg width="21" height="19"><use href="#blender"/></svg></span>
  <span class="app u4"><svg width="24" height="22" viewBox="0 0 24 22"><circle cx="11" cy="10" r="8" fill="none" stroke="#1a8df0" stroke-width="4"/><ellipse cx="16" cy="18" rx="6" ry="3.500" fill="#e8f4ff"/></svg></span>
  <span class="app u5"><svg width="22" height="22" viewBox="0 0 22 22"><circle cx="11" cy="11" r="10" fill="#2c2c2c" stroke="#c8c8c8" stroke-width="1.200"/><path d="M11 3C8 6 8 9 11 11M18 15C15 13 13 13 11 11M4 15C7 15 9 14 11 11" fill="none" stroke="#c8c8c8" stroke-width="1.600"/></svg></span>
  <div class="tray">
    <svg class="t1" width="12" height="7" viewBox="0 0 12 7"><path d="M1 6 6 1 11 6" fill="none" stroke="#eee" stroke-width="1.200"/></svg>
    <svg class="t2" width="16" height="16" viewBox="0 0 16 16"><circle cx="8" cy="8" r="7" fill="#222" stroke="#ccc"/><path d="M8 2C6 5 6 7 8 8M13 11C11 9 10 9 8 8M3 11C5 11 7 10 8 8" fill="none" stroke="#ccc"/><circle cx="4" cy="12" r="3" fill="#e81d1d"/></svg>
    <svg class="t3" width="15" height="14" viewBox="0 0 15 14"><path d="M4 1H15V10H4ZM9 10V13H5M12 13H9M0 1H2V7H0Z" fill="none" stroke="#ddd"/></svg>
    <svg class="t4" width="16" height="13" viewBox="0 0 16 13"><path d="M1 4.500H3.500L7 1V12L3.500 8.500H1Z" fill="none" stroke="#ddd"/><path d="M9.500 4C10.500 5.500 10.500 7.500 9.500 9M12 2.500C13.500 5 13.500 8 12 10.500M14.500 1C16 4.500 16 8.500 14.500 12" fill="none" stroke="#999"/></svg>
    <svg class="t5" width="17" height="11" viewBox="0 0 17 11"><rect x="3" y="2" width="13" height="8" fill="none" stroke="#ddd"/><rect x="3" y="2" width="9" height="8" fill="#ddd"/><path d="M0 1H4V4H0Z" fill="#eee"/></svg>
    <span class="t6">中</span>
    <div class="clock"><div>21:33</div><div>2019/12/15 星期日</div></div>
    <span class="notif"><svg width="15" height="14" viewBox="0 0 15 14"><path d="M0 0H15V11H8L5 14V11H0Z" fill="#fff"/><path d="M3 3H12M3 5.500H12M3 8H9" stroke="#111"/></svg><em>6</em></span>
  </div>
</footer>
</body>
</html>
```

FILE: styles.css
```css
* { box-sizing: border-box; }
html, body { margin: 0; padding: 0; }
body {
  width: 1280px; height: 720px; overflow: hidden;
  display: flex; flex-direction: column;
  font-family: "Noto Sans", "Noto Sans CJK SC", sans-serif;
  font-size: 11px; letter-spacing: -.35px; color: #c9c9c9; background: #1b1b1b;
}
svg { display: block; flex: none; }
.defs { position: absolute; }

/* title bar */
.titlebar { height: 22px; background: #fff; display: flex; align-items: center; padding-left: 3px; color: #222; font-size: 11.400px; letter-spacing: 0; border-bottom: 1px solid #9a9a9a; flex: none; }
.title-logo { margin-right: 5px; }
.winctl { margin-left: auto; display: flex; gap: 32px; padding-right: 16px; }

/* top bar */
.topbar { height: 22px; background: #232323; display: flex; align-items: flex-end; flex: none; }
.top-logo { margin: 0 0 3px 8px; }
.menus { display: flex; height: 22px; align-items: center; margin-left: 8px; gap: 14px; width: 207px; flex: none; font-size: 10.500px; }
.menus span { color: #c8c8c8; }
.tabs { display: flex; gap: 2px; height: 18px; flex: none; }
.tab { background: #343434; color: #bdbdbd; display: flex; align-items: center; padding: 1px 8.300px 0; border-radius: 3px 3px 0 0; white-space: nowrap; font-size: 10.500px; }
.tab.active { background: #404040; color: #dadada; }
.tab.plus { font-size: 15px; padding: 0 4px; color: #ddd; }
.selector { display: flex; align-items: center; height: 22px; padding-bottom: 1px; gap: 2px; flex: none; }
.sel-scene { margin-left: 12px; }
.sel-layer { margin-left: 9px; }
.sel-field { background: #2a2a2a; height: 17px; display: flex; align-items: center; padding-left: 7px; width: 112px; margin-right: -1px; border-radius: 3px 0 0 3px; color: #c4c4c4; }
.sel-copy { width: 17px; height: 17px; background: #505050; display: flex; align-items: center; justify-content: center; margin-right: -2px; }
.sel-x { width: 18px; height: 17px; background: #333; border-radius: 0 8px 8px 0; color: #777; display: flex; align-items: center; justify-content: center; font-size: 14px; }

/* workspace */
.workspace { height: 618px; display: flex; background: #1b1b1b; flex: none; }
.leftcol { width: 1056px; display: flex; flex-direction: column; flex: none; }
.viewport { height: 570px; position: relative; overflow: hidden; border-radius: 5px 5px 0 0; flex: none; }
.scene { position: absolute; inset: 0; width: 100%; height: 100%; }
.vp-info { position: absolute; left: 72px; top: 8px; line-height: 19px; color: #d2d2d2; }
.toolbar { position: absolute; left: 8px; top: 11px; display: flex; flex-direction: column; gap: 5px; width: 38px; }
.tool-group { display: flex; flex-direction: column; border-radius: 5px; overflow: hidden; background: #4e4f51; box-shadow: 0 1px 2px rgba(0,0,0,.35); }
.tool { height: 32.600px; flex: none; display: flex; align-items: center; justify-content: center; border-bottom: 1px solid #323233; position: relative; }
.tool:last-child { border-bottom: 0; }
.tool.on { background: #1f1f1f; }
.tool.corner::after { content: ""; position: absolute; right: 2px; bottom: 2px; border-style: solid; border-width: 0 0 4px 4px; border-color: transparent transparent #2a2a2a transparent; }
.navgizmo { position: absolute; left: 864px; top: 12px; display: flex; gap: 3px; }
.nav { width: 26px; height: 26px; border-radius: 50%; background: #1e1e1f; display: flex; align-items: center; justify-content: center; }
.axis { position: absolute; left: 993px; top: 8px; }
.axis-y { font-size: 10px; fill: #3fa83f; }
.axis-z { font-size: 10px; fill: #2a48b0; }
.side-arrow { position: absolute; left: 1049px; top: 14px; width: 7px; height: 16px; background: #444; color: #aaa; line-height: 15px; font-size: 11px; text-align: center; border-radius: 3px 0 0 3px; }

.vp-header { position: absolute; left: 0; right: 0; bottom: 2px; height: 19px; display: flex; align-items: stretch; }
.hbtn { background: #202020; display: flex; align-items: center; border-radius: 3px; color: #c8c8c8; white-space: nowrap; flex: none; }
.h-type { width: 27px; margin-left: 11px; gap: 2px; padding-left: 2px; background: #2b2b2b; }
.h-mode { width: 99px; margin-left: 9px; padding: 0 4px; gap: 5px; }
.push { margin-left: auto; }
.selmode { display: flex; margin-left: 5px; width: 54px; background: #555; border-radius: 4px; overflow: hidden; flex: none; }
.selmode span { width: 18px; display: flex; align-items: center; justify-content: center; }
.selmode .on { background: #4a9fc0; }
.hbtn.m { justify-content: center; margin-left: 3.300px; }
.hbtn.m-first { margin-left: 6px; }
.w35 { width: 35px; }
.w39 { width: 39px; }
.w30 { width: 30px; }
.w33 { width: 33px; }
.w43 { width: 43px; }
.w32 { width: 32px; }
.w34 { width: 34px; }
.hbtn.uv { background: #262626; margin-left: 0; width: 29px; }
.h-global { width: 72px; margin-left: 20px; padding: 0 4px; gap: 6px; background: #2a2828; }
.h-pivot { margin-left: 6px; width: 28px; padding-left: 2px; gap: 2px; background: #2a2828; }
.split { display: flex; border-radius: 3px; overflow: hidden; background: #232323; flex: none; }
.split .blue { background: #4a8ca8; display: flex; align-items: center; justify-content: center; width: 18px; }
.split .d { display: flex; align-items: center; justify-content: center; gap: 2px; flex: 1; }
.h-snap { width: 46px; margin-left: 7px; }
.h-prop { margin-left: 7px; width: 47px; background: #5c5c5c; gap: 2px; padding-left: 2px; }
.h-prop i { width: 1px; }
.h-filter { margin-left: 80px; width: 28px; padding-left: 2px; gap: 1px; }
.h-giz { margin-left: 6px; width: 37px; }
.h-ovl { margin-left: 5px; width: 37px; }
.h-xray { margin-left: 6px; width: 17px; justify-content: center; background: #444; }
.shade { margin-left: 6px; width: 91px; display: flex; background: #4a4a4a; border-radius: 4px; overflow: hidden; flex: none; }
.shade span { width: 18px; display: flex; align-items: center; justify-content: center; }
.shade .sd { background: #232323; flex: 1; }

/* sidebar */
.sidebar { width: 224px; padding-left: 4px; display: flex; flex-direction: column; flex: none; }
.outliner { height: 199px; background: #2b2b2b; border-radius: 5px; display: flex; flex-direction: column; flex: none; }
.ol-head { height: 28px; background: #232323; display: flex; align-items: center; padding-left: 7px; border-radius: 5px 5px 0 0; flex: none; }
.ol-btn { display: flex; align-items: center; height: 18px; gap: 3px; background: #2c2c2c; border-radius: 4px; padding-left: 3px; }
.w-a { width: 31px; }
.w-b { width: 29px; margin-left: 5px; }
.ol-search { width: 104px; height: 18px; margin-left: 15px; background: #2e2e2e; border-radius: 4px; display: flex; align-items: center; padding-left: 6px; }
.ol-filter { margin-left: 16px; }
.ol-row { height: 18.700px; display: flex; align-items: center; color: #d8d8d8; flex: none; padding-right: 9px; }
.ol-row.alt { background: #303030; }
.r0 { padding-left: 21px; gap: 8px; margin-top: .4px; }
.r1 { padding-left: 23px; }
.r1 .tr { margin-right: 10px; }
.check { width: 11px; height: 11px; background: #e2e2e2; color: #222; font-size: 10px; font-weight: 700; line-height: 11px; text-align: center; border-radius: 2px; margin-right: 7px; letter-spacing: 0; }
.ic { margin-right: 7px; }
.r2 { padding-left: 40px; }
.lbl { margin-left: 8px; }
.dim .lbl { color: #7d7d7d; }
.ic2 { opacity: .8; }
.vis { margin-left: auto; }
.hl { width: 16px; height: 16px; margin: 0 -2px; background: #6a6a6a; border-radius: 4px; display: flex; align-items: center; justify-content: center; flex: none; }
.r1 .hl { margin: 0 5px 0 -2px; }
.active-name { color: #e7a23c; }
.badge { width: 20px; height: 19px; border-radius: 4px; display: flex; align-items: center; justify-content: center; flex: none; }
.b-cam { margin-left: 18px; background: #5e7068; }
.b-mesh { background: #1e5a48; margin-left: 2px; }
.bd-light { margin-left: 22px; }
.bd-plane { margin-left: 20px; }
.bd-wr1 { margin-left: 21px; }
.bd-wr2 { margin-left: 22px; }
.bd-mesh2 { margin-left: 5px; }

/* properties */
.properties { flex: 1; margin-top: 2px; display: flex; flex-direction: column; background: #2c2c2c; min-height: 0; font-size: 10.600px; }
.pr-head { height: 25px; background: #1d1d1d; display: flex; align-items: center; flex: none; padding-left: 10px; }
.pr-type { display: flex; align-items: center; gap: 1px; width: 40px; }
.pr-obj { margin-right: 7px; }
.pr-name { color: #c8c8c8; }
.pr-pin { margin-left: auto; margin-right: 9px; }
.pr-body { flex: 1; display: flex; min-height: 0; overflow: hidden; }
.pr-tabs { width: 26px; flex: none; background: #252525; display: flex; flex-direction: column; gap: 1px; padding: 8px 0 0 2px; }
.ptab { width: 24px; height: 25.300px; flex: none; background: #3a3a3a; border-radius: 4px 0 0 4px; display: flex; align-items: center; justify-content: center; }
.g1 { margin-bottom: 6.400px; }
.g2 { margin-bottom: 8px; }
.g3 { background: #4a4a4a; }
.pr-content { flex: 1; min-width: 0; overflow: hidden; }
.objrow { height: 34px; display: flex; align-items: center; padding: 0 0 2px 11px; }
.objrow .ch { margin: 0 0 0 3px; }
.objfield { width: 150px; height: 21px; border: 1px solid #3a3a3a; background: #333; display: flex; align-items: center; padding-left: 7px; border-radius: 3px; color: #bcbcbc; flex: none; }
.phead { height: 22.500px; display: flex; align-items: center; padding-left: 7px; gap: 5px; background: #2b2b2d; color: #d0d0d0; }
.phead.open { height: 21px; }
.gr { margin-left: auto; margin-right: 6px; }
.tf { background: #3e3e3e; height: 233px; padding-top: 9px; }
.tfgroup { margin-bottom: 3px; }
.tfrow { display: grid; grid-template-columns: 80px 60px 14px 7px; height: 18.500px; align-items: center; }
.tfrow label { text-align: right; color: #d8d8d8; grid-column: 1; white-space: nowrap; }
.fld { grid-column: 2; background: #555; height: 18px; margin-left: 9px; width: 60px; display: flex; align-items: center; justify-content: center; color: #dcdcdc; border-bottom: 1px solid #3e3e3e; }
.tfrow svg { margin-left: 12px; }
.tfrow b { width: 4px; height: 4px; border-radius: 50%; background: #e6e6e6; margin-left: 22px; }
.tfrow i { display: block; }
.tfgroup .tfrow:first-child .fld { border-radius: 4px 4px 0 0; }
.tfgroup .tfrow:last-child .fld { border-radius: 0 0 4px 4px; border-bottom: 0; }
.rotmode { margin-top: 4px; }
.drop { background: #1f1f1f; border-radius: 3px; justify-content: flex-start; padding-left: 6px; gap: 2px; white-space: nowrap; }
.tfrow .drop svg { margin-left: 0; }
.delta { display: flex; align-items: center; gap: 6px; padding-left: 21px; margin-top: 13px; color: #d0d0d0; }
.closed { margin-top: 2px; }

/* timeline */
.timeline { height: 48px; background: #232323; flex: none; display: flex; flex-direction: column; }
.ruler { height: 14px; overflow: hidden; position: relative; display: flex; margin-left: -4px; padding-top: 5px; color: #c4c4c4; flex: none; }
.ruler span { width: 78.400px; text-align: center; flex: none; line-height: 16px; }
.playhead { position: absolute; left: 404px; top: 4px; width: 24px; height: 10px; background: #2d8a3e; color: #ddd; border-radius: 4px 4px 0 0; font-style: normal; text-align: center; line-height: 18px; }
.scrollrow { height: 8px; display: flex; align-items: center; padding-left: 8px; flex: none; }
.scrollbar { height: 8px; width: 1042px; background: #565a68; border-radius: 4px; display: flex; justify-content: space-between; margin-right: 1px; }
.scrollbar i { display: block; width: 8px; height: 8px; border-radius: 50%; background: #3f4350; }
.tl-head { height: 26px; padding: 5.500px 16px 0 0; display: flex; align-items: flex-start; flex: none; }
.tl-head > * { height: 19px; display: flex; align-items: center; flex: none; }
.tl-type { margin-left: 11px; gap: 2px; width: 31px; }
.tl-menu { background: #2c2c2c; padding-left: 7px; gap: 8px; color: #c4c4c4; }
.w1 { width: 70px; border-radius: 3px 0 0 3px; }
.w2 { width: 49px; padding-left: 3px; gap: 5px; border-radius: 0 3px 3px 0; }
.tl-plain { color: #c4c4c4; }
.p1 { margin-left: 8px; }
.p2 { margin-left: 14px; }
.rec { margin-left: auto; width: 18px; background: #505050; border-radius: 4px; justify-content: center; }
.rec i { width: 8px; height: 8px; border-radius: 50%; background: #eee; }
.transport { margin-left: 10px; display: flex; width: 107px; gap: 1px; }
.transport span { flex: 1; height: 19px; background: #505050; display: flex; align-items: center; justify-content: center; }
.transport span:first-child { flex: .7; border-radius: 8px 0 0 8px; }
.transport span:last-child { border-radius: 0 8px 8px 0; }
.curframe { margin-left: 199px; width: 70px; background: #505050; border-radius: 9px; justify-content: center; color: #ddd; }
.preview { margin-left: 5px; width: 19px; background: #444; border-radius: 5px 0 0 5px; justify-content: center; }
.range { width: 161px; background: #505050; border-radius: 0 9px 9px 0; }
.rng { display: flex; align-items: center; height: 19px; color: #cfcfcf; }
.rng u, .rng s { text-decoration: none; }
.r-a { width: 83px; padding: 0 16px 0 13px; justify-content: space-between; border-right: 1px solid #3a3a3a; }
.r-b { flex: 1; padding: 0 14px 0 12px; justify-content: space-between; }

/* status */
.statusbar { height: 22px; background: #262626; display: flex; align-items: center; flex: none; color: #c8c8c8; }
.key { margin-left: 8px; width: 16px; height: 16px; border: 1px solid #c8c8c8; border-radius: 4px; display: flex; align-items: center; justify-content: center; }
.st-left { margin-left: 8px; }
.st-right { margin-left: auto; margin-right: 55px; white-space: nowrap; font-size: 10px; }

/* taskbar */
.taskbar { height: 36px; background: #0b1017; display: flex; align-items: center; flex: none; }
.tb-start { margin-left: 14px; width: 16px; }
.tb-cortana { margin-left: 30px; width: 15px; }
.tb-view { margin-left: 30px; width: 16px; }
.tb-search { margin: 0 0 2px 38px; width: 219px; height: 28px; background: #fff; display: flex; align-items: center; padding: 0 5px 0 9px; flex: none; }
.sr-up { margin-left: 5px; }
.sr-q { margin-left: auto; }
.app { height: 36px; display: flex; align-items: center; justify-content: center; position: relative; flex: none; }
.app::after { content: ""; position: absolute; bottom: 0; height: 3px; background: #76b9ed; left: 0; right: 0; }
.u1 { margin-left: 11px; width: 36px; }
.u2 { margin-left: 11px; width: 36px; }
.u3 { margin-left: 6px; width: 45px; background: #2c3742; }
.u4 { margin-left: 5px; width: 38px; }
.u5 { margin-left: 7px; width: 37px; }
.tray { margin-left: auto; display: flex; align-items: center; height: 36px; color: #eee; width: 291px; flex: none; letter-spacing: 0; }
.t1 { margin-left: 8px; }
.t2 { margin-left: 8px; }
.t3 { margin-left: 7px; }
.t4 { margin-left: 5px; }
.t5 { margin-left: 6px; }
.t6 { margin-left: 9px; font-size: 13px; width: 14px; }
.clock { margin-left: 5px; width: 100px; text-align: center; line-height: 18px; font-size: 11.500px; white-space: nowrap; flex: none; }
.notif { margin-left: 15px; position: relative; }
.notif em { position: absolute; left: 8px; top: 5px; width: 14px; height: 14px; border-radius: 50%; background: #333; border: 1px solid #bbb; color: #fff; font-size: 9px; font-style: normal; font-weight: 700; text-align: center; line-height: 12px; }
```
